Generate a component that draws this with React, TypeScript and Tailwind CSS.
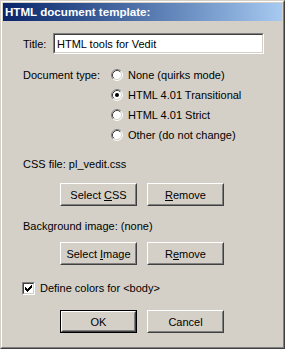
import React from "react";

const font = { fontFamily: '"Liberation Sans", Arial, sans-serif' };

function Btn({ children, isDefault }: { children: React.ReactNode; isDefault?: boolean }) {
  const bevel = (
    <div className="flex-1 flex border border-t-white border-l-white border-r-[#404040] border-b-[#404040]">
      <div className="flex-1 flex items-center justify-center border border-t-[#d4d0c8] border-l-[#d4d0c8] border-r-[#808080] border-b-[#808080] text-[11px] text-black">
        <span>{children}</span>
      </div>
    </div>
  );
  if (isDefault) {
    return <div className="w-[77px] h-[23px] flex border border-black">{bevel}</div>;
  }
  return <div className="w-[77px] h-[23px] flex">{bevel}</div>;
}

function Radio({ checked }: { checked?: boolean }) {
  return (
    <svg width="12" height="12" viewBox="0 0 12 12" className="shrink-0">
      <circle cx="6" cy="6" r="5" fill="#fff" />
      <path d="M 2.11 9.89 A 5.5 5.5 0 0 1 9.89 2.11" fill="none" stroke="#808080" strokeWidth="1" />
      <path d="M 9.89 2.11 A 5.5 5.5 0 0 1 2.11 9.89" fill="none" stroke="#fff" strokeWidth="1" />
      <path d="M 2.82 9.18 A 4.5 4.5 0 0 1 9.18 2.82" fill="none" stroke="#404040" strokeWidth="1" />
      <path d="M 9.18 2.82 A 4.5 4.5 0 0 1 2.82 9.18" fill="none" stroke="#d4d0c8" strokeWidth="1" />
      {checked && <circle cx="6" cy="6" r="2" fill="#000" />}
    </svg>
  );
}

function Check() {
  const px = [
    [6, 0], [5, 1], [6, 1], [0, 2], [4, 2], [5, 2], [6, 2],
    [0, 3], [1, 3], [3, 3], [4, 3], [5, 3],
    [0, 4], [1, 4], [2, 4], [3, 4], [4, 4],
    [1, 5], [2, 5], [3, 5], [2, 6],
  ];
  return (
    <div className="w-[13px] h-[13px] flex border border-t-[#808080] border-l-[#808080] border-r-white border-b-white">
      <div className="flex-1 flex items-center justify-center bg-white border border-t-[#404040] border-l-[#404040] border-r-[#d4d0c8] border-b-[#d4d0c8]">
        <svg width="7" height="7" viewBox="0 0 7 7" shapeRendering="crispEdges">
          {px.map(([x, y], i) => (
            <rect key={i} x={x} y={y} width="1" height="1" fill="#000" />
          ))}
        </svg>
      </div>
    </div>
  );
}

const docTypes = [
  "None (quirks mode)",
  "HTML 4.01 Transitional",
  "HTML 4.01 Strict",
  "Other (do not change)",
];

export default function App() {
  return (
    <div className="w-[285px] h-[349px] flex bg-[#d4d0c8] border border-t-[#d4d0c8] border-l-[#d4d0c8] border-r-[#404040] border-b-[#404040]" style={font}>
      <div className="flex-1 flex flex-col p-px border border-t-white border-l-white border-r-[#808080] border-b-[#808080]">
        {/* Title bar */}
        <div className="h-[18px] flex items-center pl-[2px] bg-gradient-to-r from-[#0a246a] to-[#a6caf0]">
          <span className="text-white font-bold text-[11.6px] leading-none">HTML document template:</span>
        </div>

        {/* Body */}
        <div className="flex flex-col pl-[20px] text-[11px] text-black leading-[14px]">
          <div className="mt-[12px] flex items-center h-[21px]">
            <span className="w-[30px]">Title:</span>
            <div className="w-[211px] h-[21px] flex border border-t-[#808080] border-l-[#808080] border-r-white border-b-white">
              <div className="flex-1 flex items-center pl-[2px] bg-white border border-t-[#404040] border-l-[#404040] border-r-[#d4d0c8] border-b-[#d4d0c8]">
                HTML tools for Vedit
              </div>
            </div>
          </div>

          <div className="mt-[11px] flex">
            <span className="w-[88px] h-[20px] flex items-center">Document type:</span>
            <div className="flex flex-col">
              {docTypes.map((d, i) => (
                <div key={d} className="h-[20px] flex items-center gap-[5px]">
                  <Radio checked={i === 1} />
                  <span>{d}</span>
                </div>
              ))}
            </div>
          </div>

          <div className="mt-[12px]">CSS file: pl_vedit.css</div>
          <div className="mt-[12px] flex gap-[10px] pl-[37px]">
            <Btn>Select <u>C</u>SS</Btn>
            <Btn><u>R</u>emove</Btn>
          </div>

          <div className="mt-[13px]">Background image: (none)</div>
          <div className="mt-[9px] flex gap-[10px] pl-[37px]">
            <Btn>Select <u>I</u>mage</Btn>
            <Btn>R<u>e</u>move</Btn>
          </div>

          <div className="mt-[16px] flex items-center gap-[5px] -ml-px h-[14px]">
            <Check />
            <span>Define colors for &lt;body&gt;</span>
          </div>

          <div className="mt-[15px] flex gap-[10px] pl-[37px]">
            <Btn isDefault>OK</Btn>
            <Btn>Cancel</Btn>
          </div>
        </div>
      </div>
    </div>
  );
}
